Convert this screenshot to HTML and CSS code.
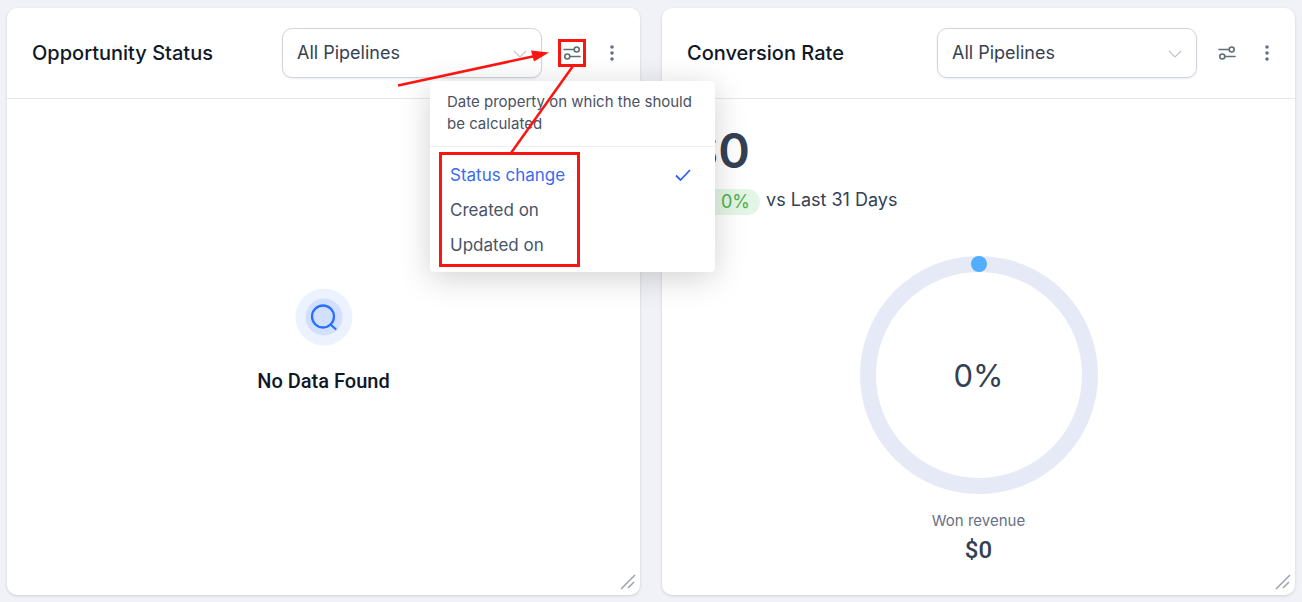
FILE: index.html
```html
<!DOCTYPE html>
<html lang="en">
<head>
  <meta charset="UTF-8" />
  <meta name="viewport" content="width=device-width, initial-scale=1.0"/>
  <title>Dashboard</title>
  <link rel="stylesheet" href="styles.css">
</head>
<body>

  <main class="dashboard">

    <section class="card">
      <header class="card-header">
        <h2>Opportunity Status</h2>
        <div class="select-wrap">
          <select aria-label="Opportunity pipeline">
            <option>All Pipelines</option>
          </select>
          <svg class="chevron" width="14" height="8" viewBox="0 0 14 8"><path d="M1 1l6 6 6-6"/></svg>
        </div>
        <div class="actions">
          <div class="menu-anchor">
            <button class="icon-btn" aria-label="Date property">
              <svg width="18" height="16" viewBox="0 0 18 16"><path d="M1 4.500h10M7 11.500h10"/><circle cx="13.700" cy="4.500" r="2.500"/><circle cx="4.300" cy="11.500" r="2.500"/></svg>
            </button>

            <div class="menu">
              <p class="menu-title">Date property on which the should be calculated</p>
              <div class="menu-list">
                <button class="menu-item active">Status change
                  <svg width="16" height="12" viewBox="0 0 16 12"><path d="M1 6.500l4.500 4.500L15 1"/></svg>
                </button>
                <button class="menu-item">Created on</button>
                <button class="menu-item">Updated on</button>
              </div>
            </div>

            <!-- callout boxes and arrows -->
            <svg class="callout" width="190" height="230" viewBox="0 0 190 230">
              <rect x="162.500" y="1.500" width="25" height="25"/>
              <rect x="43.500" y="114.500" width="138" height="112"/>
              <path d="M176 27L114 114M1 46.500L138 17"/>
              <path class="head" d="M152 13.500l-18-2 3 11z"/>
            </svg>
          </div>
          <button class="icon-btn" aria-label="More options">
            <svg class="dots" width="4" height="16" viewBox="0 0 4 16"><circle cx="2" cy="2" r="1.800"/><circle cx="2" cy="8" r="1.800"/><circle cx="2" cy="14" r="1.800"/></svg>
          </button>
        </div>
      </header>

      <div class="card-body empty">
        <div class="empty-icon">
          <svg width="58" height="58" viewBox="0 0 58 58">
            <circle cx="29" cy="29" r="28.500" fill="#edf2ff"/>
            <circle cx="29" cy="29" r="18.500" fill="#d1e0ff"/>
            <circle cx="28" cy="28.500" r="11" fill="none" stroke="#2970ff" stroke-width="2.300"/>
            <path d="M35.500 36.500l5 4.500" stroke="#2970ff" stroke-width="2.300" stroke-linecap="round"/>
          </svg>
        </div>
        <p class="empty-text">No Data Found</p>
      </div>
      <svg class="resize" width="16" height="16" viewBox="0 0 16 16"><path d="M1 15L15 1M8 14l6-6"/></svg>
    </section>

    <section class="card">
      <header class="card-header">
        <h2>Conversion Rate</h2>
        <div class="select-wrap">
          <select aria-label="Conversion pipeline">
            <option>All Pipelines</option>
          </select>
          <svg class="chevron" width="14" height="8" viewBox="0 0 14 8"><path d="M1 1l6 6 6-6"/></svg>
        </div>
        <div class="actions">
          <button class="icon-btn" aria-label="Date property">
            <svg width="18" height="16" viewBox="0 0 18 16"><path d="M1 4.500h10M7 11.500h10"/><circle cx="13.700" cy="4.500" r="2.500"/><circle cx="4.300" cy="11.500" r="2.500"/></svg>
          </button>
          <button class="icon-btn" aria-label="More options">
            <svg class="dots" width="4" height="16" viewBox="0 0 4 16"><circle cx="2" cy="2" r="1.800"/><circle cx="2" cy="8" r="1.800"/><circle cx="2" cy="14" r="1.800"/></svg>
          </button>
        </div>
      </header>

      <div class="card-body">
        <p class="total">$0</p>
        <div class="compare">
          <span class="badge">0%</span>
          <span>vs Last 31 Days</span>
        </div>
        <div class="gauge">
          <svg width="240" height="240" viewBox="0 0 240 240">
            <circle cx="120" cy="120" r="111" fill="none" stroke="#e6eaf7" stroke-width="16"/>
            <circle cx="120" cy="9" r="8" fill="#51adfd"/>
          </svg>
          <span class="gauge-value">0%</span>
        </div>
        <p class="won-label">Won revenue</p>
        <p class="won-value">$0</p>
      </div>
      <svg class="resize" width="16" height="16" viewBox="0 0 16 16"><path d="M1 15L15 1M8 14l6-6"/></svg>
    </section>

  </main>

</body>
</html>
```
FILE: styles.css
```css
* {
  box-sizing: border-box;
}

body {
  margin: 0;
  font-family: Inter, sans-serif;
  background: #f1f2f7;
  color: #344054;
}

h2,
p {
  margin: 0;
}

button {
  font: inherit;
  color: inherit;
  background: none;
  border: none;
  padding: 0;
  cursor: pointer;
}

.dashboard {
  display: grid;
  grid-template-columns: 1fr 1fr;
  gap: 22px;
  min-height: 100vh;
  padding: 8px 7px 7px;
}

.card {
  position: relative;
  display: flex;
  flex-direction: column;
  background: #fff;
  border-radius: 10px;
  box-shadow: 0 1px 3px rgba(16, 24, 40, 0.16);
}

.card-header {
  display: flex;
  align-items: center;
  gap: 16px;
  padding: 20px 14px 20px 25px;
  border-bottom: 1px solid #e6e8ee;
}

.card-header h2 {
  flex: 1;
  font-size: 20px;
  font-weight: 500;
  color: #101828;
}

/* pipeline dropdown */
.select-wrap {
  position: relative;
  width: 260px;
}

select {
  appearance: none;
  display: block;
  width: 100%;
  height: 50px;
  padding: 0 40px 2px 14px;
  font: 18px Inter, sans-serif;
  color: #374151;
  background: #fff;
  border: 1px solid #d0d5dd;
  border-radius: 10px;
  box-shadow: 0 1px 2px rgba(16, 24, 40, 0.08);
}

.chevron {
  position: absolute;
  right: 15px;
  top: 22px;
  fill: none;
  stroke: #c2c4ca;
  stroke-width: 1.2;
  pointer-events: none;
}

.actions {
  display: flex;
  gap: 12px;
}

.icon-btn {
  display: flex;
  align-items: center;
  justify-content: center;
  width: 28px;
  height: 28px;
}

.icon-btn svg {
  fill: none;
  stroke: #5f6f76;
  stroke-width: 1.6;
  stroke-linecap: round;
}

.icon-btn .dots {
  fill: #667085;
  stroke: none;
}

/* date property menu */
.menu-anchor {
  position: relative;
  z-index: 2;
}

.menu {
  position: absolute;
  top: 42px;
  left: -128px;
  width: 285px;
  background: #fff;
  border-radius: 4px;
  box-shadow: 0 6px 32px rgba(0, 0, 0, 0.18);
}

.menu-title {
  padding: 10px 17px 11px;
  font-size: 15px;
  line-height: 22px;
  color: #4b5263;
  border-bottom: 1px solid #efeff5;
}

.menu-list {
  padding: 10px 24px 10px 20px;
}

.menu-item {
  display: flex;
  align-items: center;
  justify-content: space-between;
  width: 100%;
  height: 35px;
  font-size: 17px;
  color: #475467;
}

.menu-item.active {
  color: #3b6bed;
}

.menu-item svg {
  fill: none;
  stroke: #2f63f0;
  stroke-width: 1.8;
}

.callout {
  position: absolute;
  top: 0;
  left: -161px;
  fill: none;
  stroke: #fb1510;
  stroke-width: 3;
  pointer-events: none;
}

.callout path {
  stroke-width: 2.5;
}

.callout .head {
  fill: #fb1510;
  stroke: none;
}

.card-body {
  flex: 1;
  padding: 22px 25px;
}

.empty {
  display: flex;
  flex-direction: column;
  align-items: center;
  justify-content: center;
  gap: 20px;
  padding-bottom: 10px;
  padding-top: 0;
}

.empty-icon svg {
  display: block;
}

.empty-text {
  font-family: Roboto, sans-serif;
  font-size: 20px;
  font-weight: 500;
  line-height: 30px;
  color: #101828;
}

/* conversion rate */
.total {
  font-size: 48px;
  font-weight: 600;
  line-height: 60px;
}

.compare {
  display: flex;
  align-items: flex-end;
  gap: 6px;
  margin-top: 4px;
  font-size: 18px;
  line-height: 30px;
}

.badge {
  padding: 0 10px 0 34px;
  line-height: 26px;
  color: #4caf50;
  background: #e3f5e4;
  border-radius: 13px;
}

.gauge {
  display: grid;
  place-items: center;
  margin-top: 40px;
}

.gauge svg,
.gauge-value {
  grid-area: 1 / 1;
}

.gauge-value {
  font-size: 31px;
}

.won-label {
  margin-top: 15px;
  font-size: 15px;
  line-height: 22px;
  text-align: center;
  color: #667085;
}

.won-value {
  margin-top: 3px;
  font-family: Roboto, sans-serif;
  font-size: 24px;
  font-weight: 500;
  line-height: 30px;
  text-align: center;
}

.resize {
  position: absolute;
  right: 4px;
  bottom: 5px;
  fill: none;
  stroke: #98a2b3;
  stroke-width: 1.5;
}
```
